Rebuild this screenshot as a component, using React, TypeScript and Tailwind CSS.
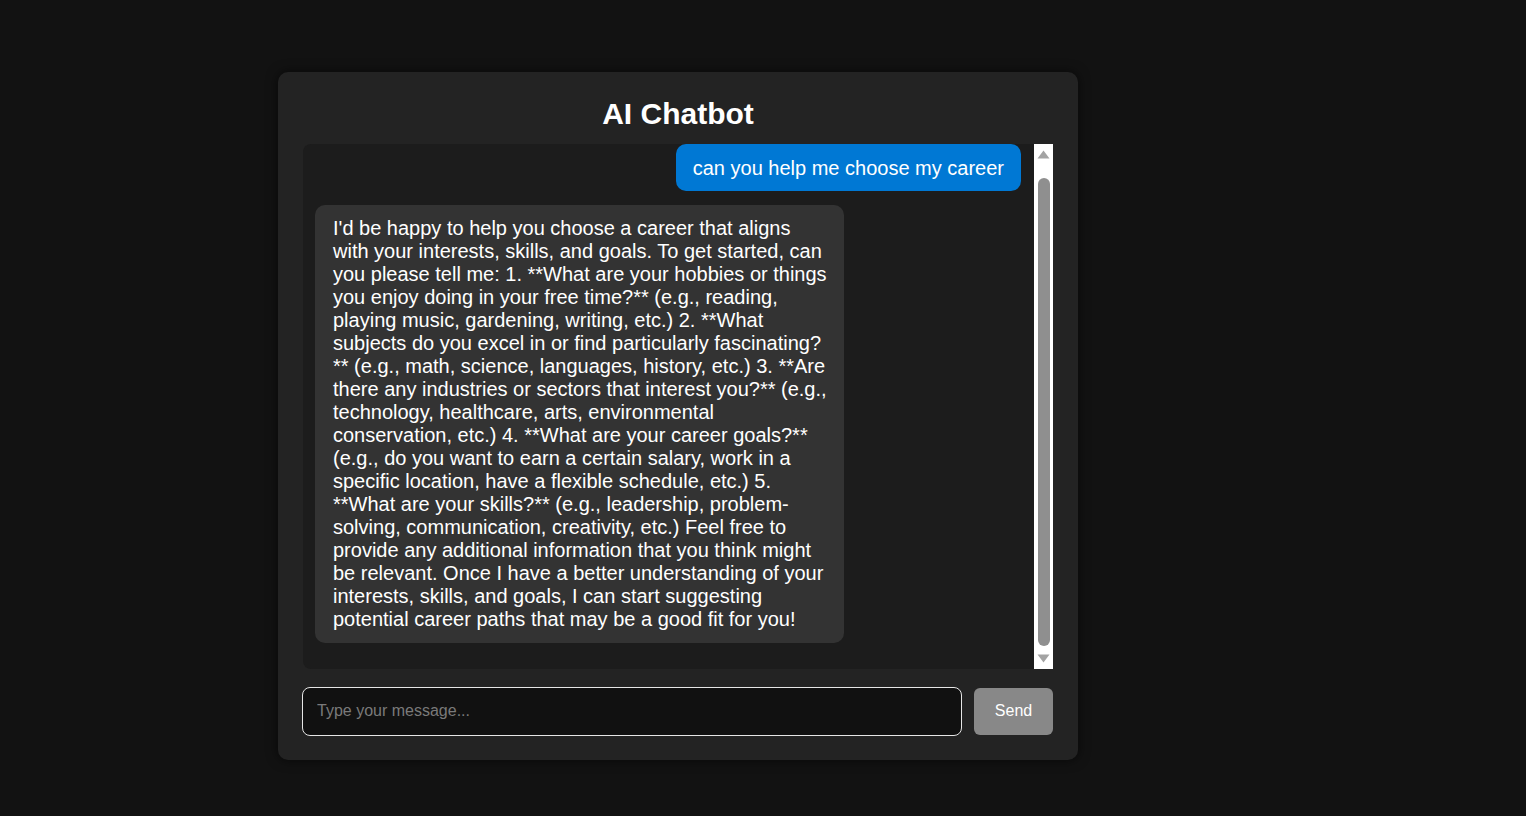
import { useState } from 'react'

interface Message {
  role: 'user' | 'bot'
  text: string
}

const messages: Message[] = [
  { role: 'user', text: 'can you help me choose my career' },
  {
    role: 'bot',
    text:
      "I'd be happy to help you choose a career that aligns with your interests, skills, and goals. To get started, can you please tell me: 1. **What are your hobbies or things you enjoy doing in your free time?** (e.g., reading, playing music, gardening, writing, etc.) 2. **What subjects do you excel in or find particularly fascinating?** (e.g., math, science, languages, history, etc.) 3. **Are there any industries or sectors that interest you?** (e.g., technology, healthcare, arts, environmental conservation, etc.) 4. **What are your career goals?** (e.g., do you want to earn a certain salary, work in a specific location, have a flexible schedule, etc.) 5. **What are your skills?** (e.g., leadership, problem-solving, communication, creativity, etc.) Feel free to provide any additional information that you think might be relevant. Once I have a better understanding of your interests, skills, and goals, I can start suggesting potential career paths that may be a good fit for you!",
  },
]

export default function App() {
  const [input, setInput] = useState('')

  return (
    <div className="min-h-screen bg-[#121212] pt-[72px] font-['Liberation_Sans',Arial,sans-serif] text-white">
      <div className="ml-[278px] w-[800px] rounded-[10px] bg-[#232323] px-[25px] pt-6 pb-6 shadow-[0_0_12px_rgba(0,0,0,0.6)]">
        <h1 className="mb-[13px] text-center text-[30px] font-bold leading-[35px]">AI Chatbot</h1>

        {/* Chat window */}
        <div className="flex h-[525px] rounded-lg bg-[#1c1c1c]">
          <div className="flex flex-1 flex-col pl-3 pr-[13px] pb-[26px]">
            {messages.map((m, i) =>
              m.role === 'user' ? (
                <div
                  key={i}
                  className="self-end rounded-[10px] bg-[#0078d4] px-[17px] pt-[13px] pb-[11px] text-[20px] leading-[23px]"
                >
                  {m.text}
                </div>
              ) : (
                <div
                  key={i}
                  className="mt-[14px] w-[529px] self-start rounded-[10px] bg-[#333333] pl-[18px] pr-4 py-3 text-[20px] leading-[23px]"
                >
                  {m.text}
                </div>
              )
            )}
          </div>

          {/* Scrollbar */}
          <div className="flex w-[19px] flex-col items-center bg-white pt-[6px] pb-[6px]">
            <svg width="13" height="9" viewBox="0 0 13 9">
              <path d="M6.5 0.5 L12.5 8.5 L0.5 8.5 Z" fill="#a3a3a3" />
            </svg>
            <div className="mt-[19px] w-3 flex-1 rounded-full bg-[#8f8f8f]" />
            <svg className="mt-2" width="13" height="9" viewBox="0 0 13 9">
              <path d="M0.5 0.5 L12.5 0.5 L6.5 8.5 Z" fill="#a3a3a3" />
            </svg>
          </div>
        </div>

        {/* Input row */}
        <div className="ml-[-1px] mt-[18px] flex items-center gap-3">
          <input
            value={input}
            onChange={e => setInput(e.target.value)}
            placeholder="Type your message..."
            className="h-[49px] flex-1 rounded-lg border border-[#e6e6e6] bg-[#111111] px-[14px] pb-[2px] text-[16px] text-white placeholder:text-[#7a7a7a] outline-none"
          />
          <button className="h-[47px] w-[79px] rounded-md bg-[#888888] pb-[2px] text-[16px] text-white">Send</button>
        </div>
      </div>
    </div>
  )
}
